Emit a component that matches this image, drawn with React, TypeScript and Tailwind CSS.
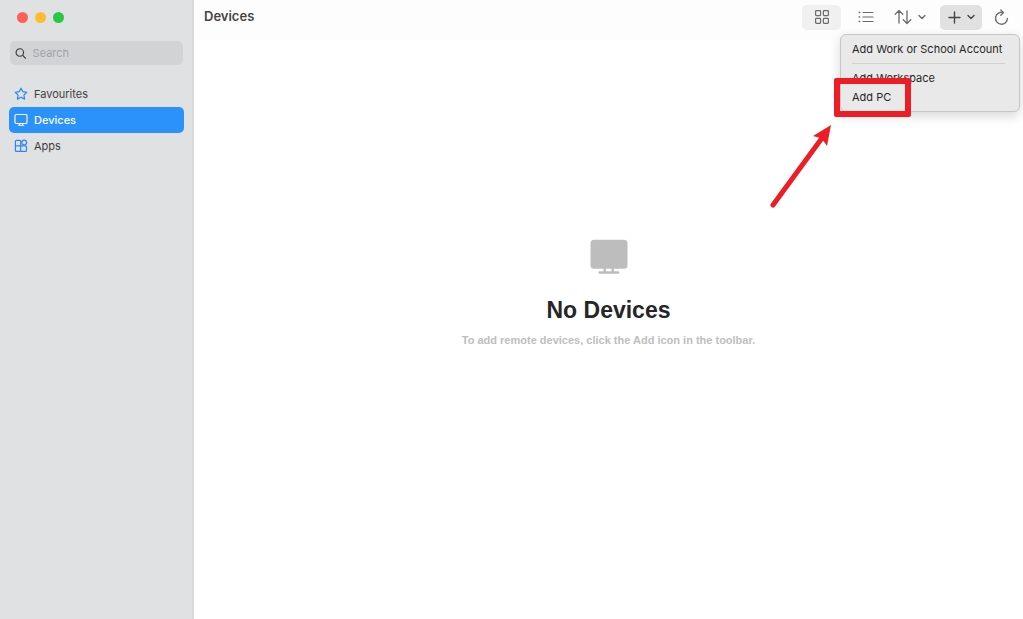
import { useState } from "react";

const navItems = [
  { label: "Favourites", icon: StarIcon },
  { label: "Devices", icon: DisplayIcon },
  { label: "Apps", icon: AppsIcon },
];

function StarIcon() {
  return (
    <svg width="14" height="14" viewBox="0 0 14 14" fill="none" stroke="currentColor" strokeWidth="1.2" strokeLinejoin="round" aria-hidden="true">
      <path d="M7 1.2 8.8 4.700l4 .6-2.900 2.800.7 4L7 10.200l-3.600 1.900.7-4L1.200 5.300l4-.6Z" />
    </svg>
  );
}

function DisplayIcon() {
  return (
    <svg width="14" height="14" viewBox="0 0 14 14" fill="none" stroke="currentColor" strokeWidth="1.1" strokeLinecap="round" aria-hidden="true">
      <rect x="1" y="1.5" width="12" height="9" rx="1" />
      <path d="M5.500 10.500v1.600M8.500 10.500v1.600M4.300 12.300h5.400" />
    </svg>
  );
}

function AppsIcon() {
  return (
    <svg width="14" height="14" viewBox="0 0 14 14" fill="none" stroke="currentColor" strokeWidth="1.2" aria-hidden="true">
      <path d="M6.700 6.800V2.400a1 1 0 0 0-1-1H2.400a1 1 0 0 0-1 1v9a1 1 0 0 0 1 1h9.100a1 1 0 0 0 1-1V7.800a1 1 0 0 0-1-1H1.400M6.700 6.800v5.600" />
      <circle cx="10.200" cy="3.600" r="2.400" />
    </svg>
  );
}

function Chevron() {
  return (
    <svg width="8" height="6" viewBox="0 0 8 6" fill="none" stroke="currentColor" strokeWidth="1.4" strokeLinecap="round" strokeLinejoin="round" aria-hidden="true">
      <path d="M1 1.4 4 4.4l3-3" />
    </svg>
  );
}

function Sidebar() {
  const [selected, setSelected] = useState("Devices");
  return (
    <aside className="flex w-[194px] shrink-0 flex-col border-r-2 border-[#d9d9da] bg-[#e0e1e3] pr-2 pl-[9px]">
      <div className="flex h-[34px] items-center gap-[7px] pl-2">
        <span className="size-[11px] rounded-full bg-[#ff5f57]" />
        <span className="size-[11px] rounded-full bg-[#febc2e]" />
        <span className="size-[11px] rounded-full bg-[#28c840]" />
      </div>
      <label className="mt-[7px] mr-px ml-px flex h-6 items-center gap-[6px] rounded-[5px] bg-[#d2d3d5] px-[5px]">
        <svg width="13" height="13" viewBox="0 0 13 13" fill="none" stroke="#3c3c3e" strokeWidth="1.3" strokeLinecap="round" aria-hidden="true">
          <circle cx="5.4" cy="5.4" r="4.2" />
          <path d="m8.6 8.6 3.2 3.2" />
        </svg>
        <input type="text" placeholder="Search" aria-label="Search" className="w-full min-w-0 bg-transparent text-[11px] text-[#3c3c3e] outline-none placeholder:text-[#a2a3a5]" />
      </label>
      <nav className="mt-4 flex flex-col">
        {navItems.map(({ label, icon: Icon }) => {
          const active = label === selected;
          return (
            <button
              key={label}
              type="button"
              onClick={() => setSelected(label)}
              className={`flex h-[26px] items-center gap-[6px] rounded-[5px] pl-[5px] text-[11px] ${active ? "bg-[#2b91fb] font-medium text-white" : "text-[#3e3e40]"}`}
            >
              <span className={active ? "text-white" : "text-[#2b87f5]"}>
                <Icon />
              </span>
              {label}
            </button>
          );
        })}
      </nav>
    </aside>
  );
}

function AddMenu() {
  return (
    <div role="menu" className="absolute top-[34px] right-[3px] z-10 w-[180px] rounded-md border border-[#c6c6c6] bg-[#e9e9e9] px-[11px] pt-[5px] pb-1 text-[11px] text-[#262626] shadow-[0_4px_12px_rgba(0,0,0,0.16)]">
      <button type="button" role="menuitem" className="flex h-[19px] w-full items-center whitespace-nowrap">
        Add Work or School Account
      </button>
      <hr className="mt-1 mr-[3px] mb-[5px] border-[#d1d1d1]" />
      <button type="button" role="menuitem" className="flex h-[19px] w-full items-center">
        Add Workspace
      </button>
      <button type="button" role="menuitem" className="flex h-[19px] w-full items-center">
        Add PC
      </button>
      <div className="pointer-events-none absolute -bottom-[6px] -left-[7px] h-[39px] w-[77px] rounded-[2px] border-[6px] border-[#ee1c25]" />
      <svg width="64" height="88" viewBox="0 0 64 88" className="pointer-events-none absolute top-[88px] -left-[72px]" aria-hidden="true">
        <path d="M4 82 53 15" stroke="#ee1c25" strokeWidth="5" strokeLinecap="round" />
        <path d="M62 2 44 13l7 2 2 1 5 7Z" fill="#ee1c25" />
      </svg>
    </div>
  );
}

function Toolbar() {
  return (
    <header className="relative flex h-10 items-start justify-between bg-[#fdfdfd] pr-[14px] pl-[10px]">
      <h1 className="flex h-[34px] items-center text-[13px] font-semibold text-[#454545]">Devices</h1>
      <div className="flex h-[34px] items-center text-[#6a6a6a]">
        <button type="button" aria-label="Grid view" className="flex h-[25px] w-[39px] items-center justify-center rounded-[5px] bg-[#f0f0f0]">
          <svg width="14" height="14" viewBox="0 0 14 14" fill="none" stroke="currentColor" strokeWidth="1.2" aria-hidden="true">
            <rect x=".6" y=".6" width="5" height="5" rx=".8" />
            <rect x="8.400" y=".6" width="5" height="5" rx=".8" />
            <rect x=".6" y="8.400" width="5" height="5" rx=".8" />
            <rect x="8.400" y="8.400" width="5" height="5" rx=".8" />
          </svg>
        </button>
        <button type="button" aria-label="List view" className="ml-[17px]">
          <svg width="16" height="12" viewBox="0 0 16 12" fill="none" stroke="currentColor" strokeWidth="1.2" strokeLinecap="round" aria-hidden="true">
            <path d="M5 1.500h10M5 6h10M5 10.500h10" />
            <path d="M1.200 1.500h.4M1.200 6h.4M1.200 10.500h.4" strokeWidth="1.600" />
          </svg>
        </button>
        <button type="button" aria-label="Sort" className="ml-5 flex items-center gap-[6px]">
          <svg width="18" height="16" viewBox="0 0 18 16" fill="none" stroke="currentColor" strokeWidth="1.3" strokeLinecap="round" strokeLinejoin="round" aria-hidden="true">
            <path d="M5 14V1.500M1.200 5.200 5 1.500l3.800 3.700M13 2v12.500M9.200 10.800 13 14.500l3.800-3.700" />
          </svg>
          <Chevron />
        </button>
        <button type="button" aria-label="Add" aria-haspopup="menu" aria-expanded="true" className="ml-[14px] flex h-[25px] w-[42px] items-center justify-center gap-[6px] rounded-[5px] bg-[#e1e1e1] pl-px text-[#444444]">
          <svg width="13" height="13" viewBox="0 0 13 13" fill="none" stroke="currentColor" strokeWidth="1.4" strokeLinecap="round" aria-hidden="true">
            <path d="M6.500 1v11M1 6.500h11" />
          </svg>
          <Chevron />
        </button>
        <button type="button" aria-label="Refresh" className="ml-3">
          <svg width="15" height="17" viewBox="0 0 15 17" fill="none" stroke="currentColor" strokeWidth="1.300" strokeLinecap="round" strokeLinejoin="round" aria-hidden="true">
            <path d="M13.500 9.300A6 6 0 1 1 9.200 3.500M6.800 1l2.700 2.600-2.700 2.700" />
          </svg>
        </button>
      </div>
      <AddMenu />
    </header>
  );
}

export default function App() {
  return (
    <div className="flex min-h-screen bg-white font-['Inter',sans-serif]">
      <Sidebar />
      <div className="flex min-w-0 flex-1 flex-col">
        <Toolbar />
        <main className="flex flex-1 flex-col items-center pt-[199px] font-['Liberation_Sans',sans-serif]">
          <svg width="38" height="36" viewBox="0 0 38 36" fill="#bdbdbd" aria-hidden="true">
            <rect x=".5" y=".8" width="37" height="29" rx="3.500" />
            <path d="M13.500 29h2.500v4h-2.500zM21.500 29H24v4h-2.500z" />
            <rect x="8.500" y="32.300" width="21" height="2.500" rx="1.200" />
          </svg>
          <h2 className="mt-5 text-[23px] leading-[30px] font-bold text-[#262626]">No Devices</h2>
          <p className="mt-[7px] text-[11px] leading-4 font-bold text-[#bebebe]">To add remote devices, click the Add icon in the toolbar.</p>
        </main>
      </div>
    </div>
  );
}
